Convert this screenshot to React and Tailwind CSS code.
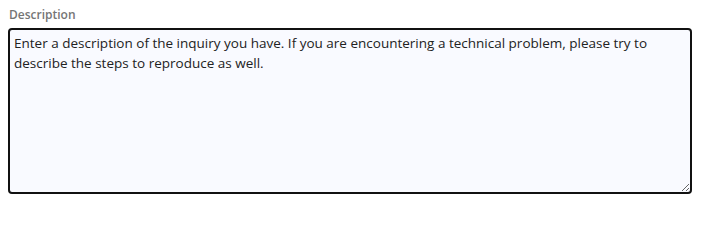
export default function App() {
  return (
    <div className="w-[701px] h-[202px] bg-white px-2 pt-[7px] font-['Open_Sans','Noto_Sans',sans-serif]">
      <label className="block text-[12px] leading-[16px] font-semibold text-[#757575] mb-[5px] ml-[1px]">
        Description
      </label>
      <textarea
        readOnly
        className="block w-[684px] h-[166px] border-2 border-[#111] rounded-[4px] bg-[#f9faff] px-[4px] pt-[3px] pb-[3px] text-[13.5px] leading-[20px] text-[#222] resize-y outline-none"
        defaultValue="Enter a description of the inquiry you have. If you are encountering a technical problem, please try to describe the steps to reproduce as well."
      />
    </div>
  );
}
